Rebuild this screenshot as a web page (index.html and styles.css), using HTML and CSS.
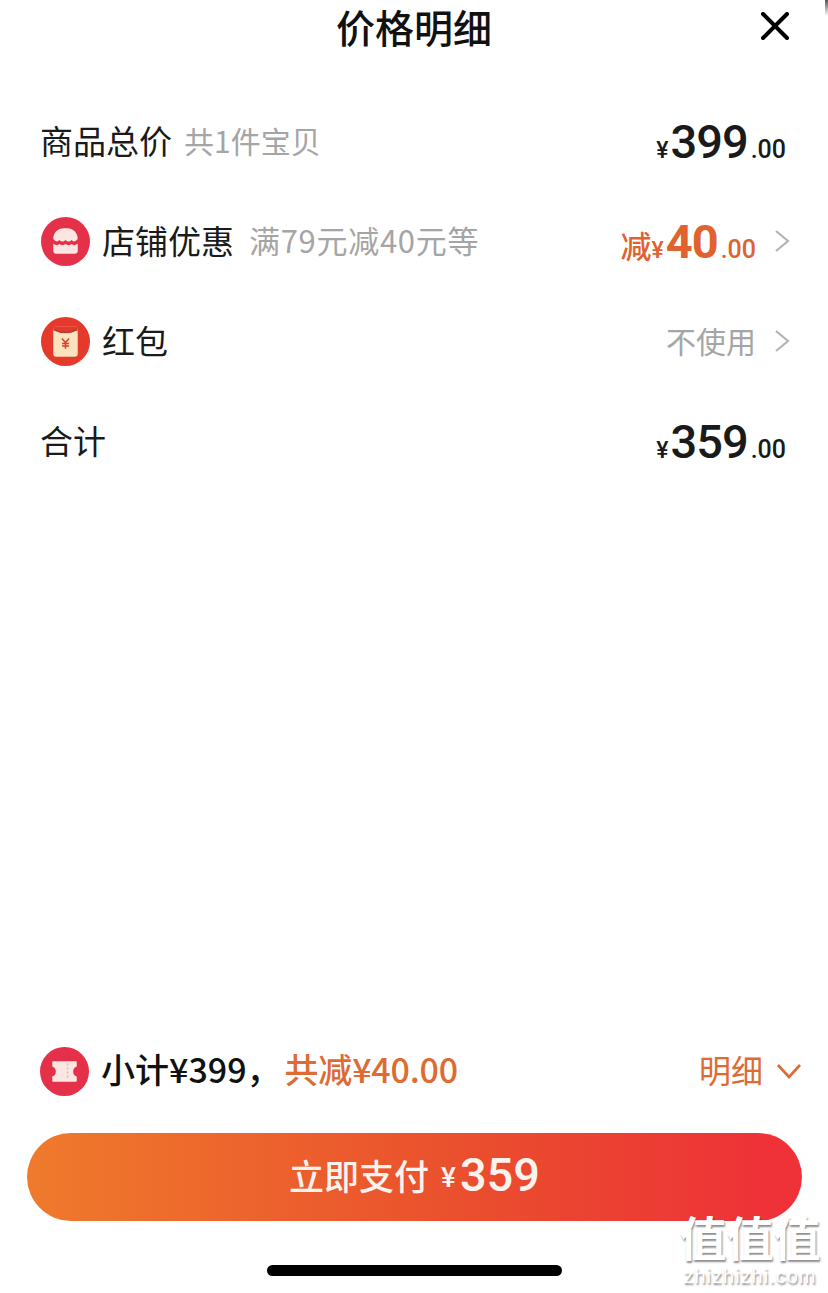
FILE: index.html
```html
<!DOCTYPE html>
<html lang="zh-CN">
<head>
  <meta charset="UTF-8">
  <title>价格明细</title>
  <link rel="stylesheet" href="styles.css">
</head>
<body>
  <div class="page">
    <header class="header">
      <h1 class="title">价格明细</h1>
      <svg class="close" viewBox="0 0 28 28" width="28" height="28"><path d="M2 2L26 26M26 2L2 26" fill="none" stroke="#000" stroke-width="4" stroke-linecap="round"/></svg>
    </header>

    <section class="rows">
      <div class="row">
        <span class="label plain">商品总价</span>
        <span class="note">共1件宝贝</span>
        <span class="price"><span class="yen">¥</span><span class="big">399</span><span class="cents">.00</span></span>
      </div>

      <div class="row">
        <svg class="badge" viewBox="0 0 48 48" width="49" height="49">
          <circle cx="24" cy="24" r="24" fill="#e5304a"/>
          <path d="M12 21.5C12 15 17 11 22 11H26C31 11 36 15 36 21.5C33.5 24.5 31.5 24.5 30 22.5C28 24.5 26 24.5 24 22.5C22 24.5 20 24.5 18 22.5C16.5 24.5 14.5 24.5 12 21.5Z" fill="#fbe6e2"/>
          <path d="M12 26C14.5 28 16.5 28 18 26.5C20 28 22 28 24 26.5C26 28 28 28 30 26.5C31.5 28 33.5 28 36 26V33C36 35 35 36 33 36H15C13 36 12 35 12 33Z" fill="#fbe6e2"/>
        </svg>
        <span class="label">店铺优惠</span>
        <span class="note note-wide">满79元减40元等</span>
        <span class="price orange"><span class="cut">减</span><span class="yen">¥</span><span class="big">40</span><span class="cents">.00</span></span>
        <svg class="arrow" viewBox="0 0 16 24" width="16" height="24"><path d="M2 2L14 12L2 22" fill="none" stroke="#b4b4b4" stroke-width="2.2"/></svg>
      </div>

      <div class="row">
        <svg class="badge" viewBox="0 0 48 48" width="49" height="49">
          <circle cx="24" cy="24" r="24" fill="#e4392b"/>
          <rect x="12" y="9" width="24" height="30" rx="3" fill="#fbe3bd"/>
          <path d="M12 9H36V13Q24 19 12 13Z" fill="#e4392b"/>
          <path d="M13 12.500Q24 18 35 12.500" fill="none" stroke="#8f4a3a" stroke-width="1"/>
          <path d="M20.500 21L24 25L27.500 21M24 25V31M20.500 26H27.500M20.500 28.500H27.500" fill="none" stroke="#d8402c" stroke-width="1.500"/>
        </svg>
        <span class="label">红包</span>
        <span class="unused">不使用</span>
        <svg class="arrow" viewBox="0 0 16 24" width="16" height="24"><path d="M2 2L14 12L2 22" fill="none" stroke="#b4b4b4" stroke-width="2.2"/></svg>
      </div>

      <div class="row">
        <span class="label plain">合计</span>
        <span class="price"><span class="yen">¥</span><span class="big">359</span><span class="cents">.00</span></span>
      </div>
    </section>

    <footer class="footer">
      <div class="summary">
        <svg class="badge" viewBox="0 0 48 48" width="49" height="49">
          <circle cx="24" cy="24" r="24" fill="#e5304a"/>
          <path d="M13 14H35C35.500 14 36 14.500 36 15V19C33.500 20 32.500 21.500 32.500 24C32.500 26.500 33.500 28 36 29V33C36 33.500 35.500 34 35 34H13C12.500 34 12 33.500 12 33V29C14.500 28 15.500 26.500 15.500 24C15.500 21.500 14.500 20 12 19V15C12 14.500 12.500 14 13 14Z" fill="#fbe6e2"/>
          <path d="M27 16V32" stroke="#e9b5ad" stroke-width="1.500" stroke-dasharray="2 2"/>
        </svg>
        <span class="subtotal">小计¥399，</span>
        <span class="saved">共减¥40.00</span>
        <span class="detail">明细</span>
        <svg class="chevron" viewBox="0 0 26 16" width="26" height="16"><path d="M2 2L13 14L24 2" fill="none" stroke="#dd6b33" stroke-width="2.600"/></svg>
      </div>
      <button class="pay"><span class="pay-text">立即支付</span><span class="pay-yen">¥</span><span class="pay-num">359</span></button>
      <div class="home-bar"></div>
    </footer>

    <div class="watermark">
      <div class="wm-cn">值值值</div>
      <div class="wm-en">zhizhizhi.com</div>
    </div>
    <div class="corner"></div>
  </div>
</body>
</html>
```

FILE: styles.css
```css
* {
  box-sizing: border-box;
}

body {
  margin: 0;
  background: #fff;
  font-family: "Noto Sans CJK SC", "Noto Sans", sans-serif;
  color: #111;
}

.page {
  position: relative;
  width: 828px;
  height: 1293px;
  display: flex;
  flex-direction: column;
  overflow: hidden;
}

.header {
  height: 91px;
  display: flex;
  justify-content: center;
  position: relative;
}

.title {
  margin: 0;
  font-size: 39px;
  line-height: 52px;
  font-weight: 500;
  color: #111;
}

.close {
  position: absolute;
  top: 12px;
  right: 39px;
}

.row {
  height: 100px;
  display: flex;
  align-items: center;
  padding: 0 38px 0 41px;
}

.badge {
  flex: none;
  margin-right: 12px;
}

.label {
  font-size: 33px;
  line-height: 44px;
  padding-bottom: 3px;
  color: #1a1a1a;
}

.plain {
  margin-left: -1px;
}

.note {
  margin-left: 12px;
  font-size: 30px;
  line-height: 44px;
  padding-bottom: 3px;
  color: #a5a5a5;
}

.note-wide {
  margin-left: 15px;
  font-size: 31px;
  letter-spacing: 0.7px;
}

.price {
  margin-left: auto;
  margin-right: 4px;
  display: flex;
  align-items: baseline;
  font-family: Roboto, "Liberation Sans", sans-serif;
  color: #1a1a1a;
}

.yen {
  font-size: 23px;
  font-weight: 500;
}

.big {
  font-size: 47px;
  font-weight: 500;
  letter-spacing: -1px;
  margin-left: 2px;
}

.cents {
  font-size: 25px;
  font-weight: 500;
  margin-left: 3px;
}

.orange {
  color: #e0622f;
  margin-right: 0;
}

.orange .big {
  font-weight: 700;
}

.cut {
  font-family: "Noto Sans CJK SC", sans-serif;
  font-size: 31px;
  font-weight: 500;
}

.arrow {
  flex: none;
  margin-left: 18px;
}

.unused {
  margin-left: auto;
  font-size: 30px;
  line-height: 44px;
  padding-bottom: 3px;
  color: #a5a5a5;
}

.footer {
  margin-top: auto;
  padding: 0 26px 17px 27px;
}

.summary {
  height: 50px;
  display: flex;
  align-items: center;
  padding: 0 0 0 13px;
  margin-bottom: 37px;
}

.subtotal {
  font-size: 34px;
  font-weight: 500;
  line-height: 46px;
  padding-bottom: 4px;
  color: #111;
}

.saved {
  font-size: 34px;
  font-weight: 500;
  line-height: 46px;
  padding-bottom: 4px;
  letter-spacing: -0.2px;
  color: #dd6b33;
  margin-left: 4px;
}

.detail {
  margin-left: auto;
  font-size: 32px;
  line-height: 46px;
  padding-bottom: 4px;
  color: #dd6b33;
}

.chevron {
  margin-left: 13px;
}

.pay {
  width: 775px;
  height: 88px;
  display: flex;
  align-items: center;
  justify-content: center;
  border: none;
  padding: 0 0 6px;
  border-radius: 44px;
  background: linear-gradient(90deg, #ef7a2c 0%, #ea4c2e 60%, #ee3238 95%);
  color: #fdf3ee;
  font-family: inherit;
}

.pay-text {
  font-size: 35px;
  font-weight: 500;
}

.pay-yen {
  margin-left: 12px;
  font-family: Roboto, sans-serif;
  font-size: 28px;
  font-weight: 500;
  padding-top: 6px;
}

.pay-num {
  margin-left: 4px;
  font-family: Roboto, sans-serif;
  font-size: 47px;
  font-weight: 500;
}

.home-bar {
  width: 295px;
  height: 11px;
  margin: 44px 0 0 240px;
  border-radius: 6px;
  background: #000;
}

/* watermark sits over the button corner */
.watermark {
  position: absolute;
  right: 7px;
  bottom: 5px;
  width: 142px;
  text-align: center;
  color: #fff;
  text-shadow: 1px 2px 2px rgba(0, 0, 0, 0.45);
}

.wm-cn {
  font-size: 47px;
  font-weight: 700;
  line-height: 50px;
  margin-bottom: 3px;
}

.wm-en {
  font-family: "Liberation Sans", sans-serif;
  font-size: 20px;
  line-height: 24px;
  letter-spacing: 1px;
}

/* dark sliver of the screen edge, top right */
.corner {
  position: absolute;
  top: 0;
  right: 0;
  width: 3px;
  height: 16px;
  background: linear-gradient(180deg, #555, rgba(85, 85, 85, 0));
}
```
